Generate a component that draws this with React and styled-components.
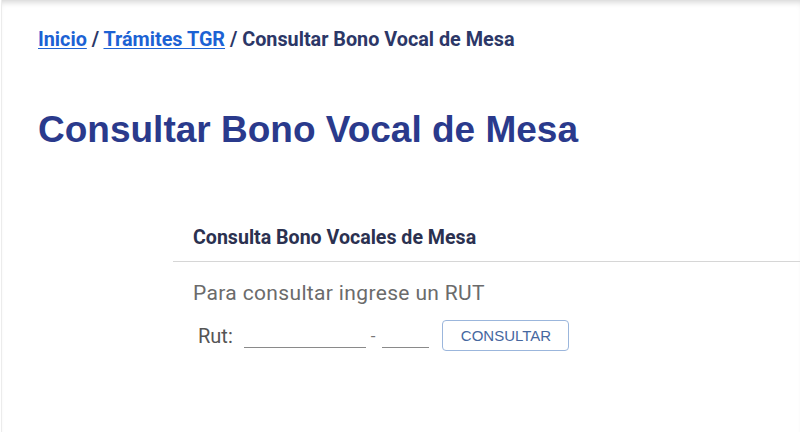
import React from "react";
import styled, { createGlobalStyle } from "styled-components";

const GlobalStyle = createGlobalStyle`
  html, body {
    margin: 0;
    padding: 0;
    background: #fff;
  }
  body {
    font-family: Roboto, "Liberation Sans", Arial, sans-serif;
  }
`;

const Shell = styled.div`
  height: 432px;
  margin-left: 2px;
  box-shadow: inset 0 6px 6px -4px rgba(0, 0, 0, 0.18), -1px 0 0 #ececec;
  overflow: hidden;
`;

const Main = styled.main`
  padding: 28px 0 0 36px;
`;

const Breadcrumb = styled.nav`
  font-family: Roboto, "Liberation Sans", sans-serif;
  font-weight: 700;
  font-size: 19.8px;
  line-height: 24px;
  color: #2c3767;
`;

const Crumb = styled.a`
  color: #1c62d4;
  text-decoration: underline;
  text-underline-offset: 2px;
`;

const Title = styled.h1`
  margin: 56px 0 0;
  font-family: "Liberation Sans", Arial, sans-serif;
  font-weight: 700;
  font-size: 37px;
  line-height: 44px;
  color: #2a3a8c;
`;

const Card = styled.section`
  margin: 74px 0 0 135px;
`;

const CardTitle = styled.h2`
  margin: 0;
  padding: 0 0 11px 20px;
  font-family: Roboto, sans-serif;
  font-weight: 700;
  font-size: 19.6px;
  line-height: 24px;
  color: #2b3150;
  border-bottom: 1px solid #d6d6d6;
`;

const CardBody = styled.div`
  padding: 18px 0 0 20px;
`;

const Hint = styled.p`
  margin: 0;
  font-family: Roboto, sans-serif;
  font-size: 21px;
  letter-spacing: 0.35px;
  line-height: 26px;
  color: #6b6b6b;
`;

const Form = styled.form`
  display: flex;
  align-items: center;
  height: 31px;
  margin-top: 14px;
  padding-left: 5px;
`;

const Label = styled.label`
  font-family: Roboto, sans-serif;
  font-size: 20px;
  color: #555;
  margin-right: 11px;
`;

const Field = styled.input`
  align-self: flex-end;
  width: ${({ $w }) => $w}px;
  height: 26px;
  margin: 0 0 3px;
  padding: 0;
  border: 0;
  border-bottom: 1px solid #8a8a8a;
  outline: none;
  background: transparent;
  font-size: 16px;
`;

const Dash = styled.span`
  margin: 0 7px 0 5px;
  color: #777;
  font-size: 17px;
`;

const Button = styled.button`
  margin-left: 13px;
  width: 127px;
  height: 31px;
  border: 1px solid #9bb6dc;
  border-radius: 4px;
  background: #fff;
  color: #46679f;
  font-family: "Liberation Sans", Arial, sans-serif;
  font-size: 15px;
  cursor: pointer;
`;

export default function App() {
  return (
    <>
      <GlobalStyle />
      <Shell>
        <Main>
          <Breadcrumb>
            <Crumb href="#">Inicio</Crumb> / <Crumb href="#">Trámites TGR</Crumb> / Consultar Bono Vocal de Mesa
          </Breadcrumb>
          <Title>Consultar Bono Vocal de Mesa</Title>
          <Card>
            <CardTitle>Consulta Bono Vocales de Mesa</CardTitle>
            <CardBody>
              <Hint>Para consultar ingrese un RUT</Hint>
              <Form onSubmit={e => e.preventDefault()}>
                <Label>Rut:</Label>
                <Field $w={122} />
                <Dash>-</Dash>
                <Field $w={47} />
                <Button type="submit">CONSULTAR</Button>
              </Form>
            </CardBody>
          </Card>
        </Main>
      </Shell>
    </>
  );
}
